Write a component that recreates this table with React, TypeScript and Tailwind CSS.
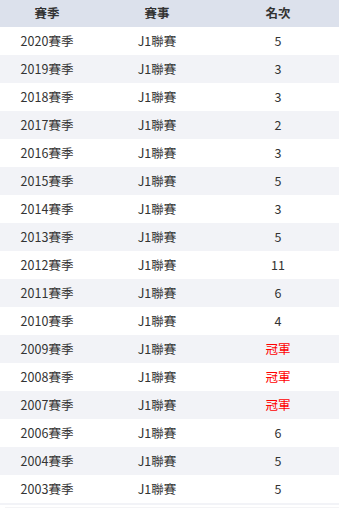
const rows: [string, string][] = [
  ["2020", "5"],
  ["2019", "3"],
  ["2018", "3"],
  ["2017", "2"],
  ["2016", "3"],
  ["2015", "5"],
  ["2014", "3"],
  ["2013", "5"],
  ["2012", "11"],
  ["2011", "6"],
  ["2010", "4"],
  ["2009", "冠軍"],
  ["2008", "冠軍"],
  ["2007", "冠軍"],
  ["2006", "6"],
  ["2004", "5"],
  ["2003", "5"],
];

export default function App() {
  return (
    <div
      className="w-[339px] h-[509px] bg-white text-[#333] text-[12.5px] overflow-hidden"
      style={{ fontFamily: '"Noto Sans CJK TC", "Noto Sans", sans-serif' }}
    >
      <div className="flex h-[27px] items-center bg-[#dce1ec] font-bold">
        <div className="w-[94px] text-center">賽季</div>
        <div className="w-[126px] text-center">賽事</div>
        <div className="w-[116px] text-center">名次</div>
      </div>
      {rows.map(([year, rank], i) => (
        <div
          key={year}
          className={`flex h-[28px] items-center ${i % 2 === 1 ? "bg-[#f2f3f7]" : "bg-white"}`}
        >
          <div className="w-[94px] text-center">{year}賽季</div>
          <div className="w-[126px] text-center">J1聯賽</div>
          <div className={`w-[116px] text-center ${rank === "冠軍" ? "text-[#ff0000]" : ""}`}>{rank}</div>
        </div>
      ))}
      <div className="h-[2px] bg-[#f2f3f7]" />
      <div className="ml-[5px] mt-[2px] h-px bg-[#f4f4f6]" />
    </div>
  );
}
